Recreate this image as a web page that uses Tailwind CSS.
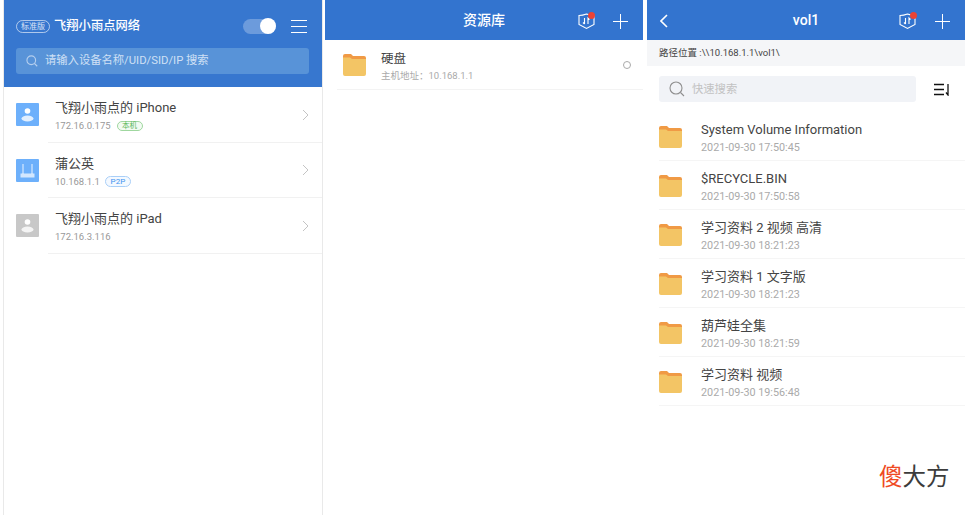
<!DOCTYPE html>
<html lang="zh"><head><meta charset="utf-8"><script src="https://cdn.jsdelivr.net/npm/@tailwindcss/browser@4"></script></head>
<body class="bg-white">
<div class="relative flex w-[968px] h-[515px] overflow-hidden bg-white text-[#333] font-['Roboto','Noto_Sans_CJK_SC',sans-serif]">

<!-- Panel 1 -->
<section class="ml-[3px] w-[320px] h-full border-x border-[#e9e9e9] flex flex-col">
  <header class="h-[87px] bg-[#3777cf] pl-[12px] pr-3 pt-[17px] flex flex-col">
    <div class="flex items-center h-[18px]">
      <span class="w-[34px] h-[13px] rounded-full border border-white/60 text-[8px] leading-[11px] text-center text-white/80 whitespace-nowrap">标准版</span>
      <span class="ml-[4px] text-[12.300px] font-medium text-white whitespace-nowrap">飞翔小雨点网络</span>
      <span class="ml-auto relative w-[33px] h-[15px] rounded-full bg-[#6c9bdc]"><span class="absolute right-0 -top-[1px] w-[16px] h-[16px] rounded-full bg-white"></span></span>
      <svg class="ml-[15px] mr-[3px]" width="16" height="15" viewBox="0 0 16 15" fill="none" stroke="#fff" stroke-width="1"><path d="M0 1.500h16M0 7.500h16M0 13.500h16"/></svg>
    </div>
    <div class="mt-[13px] h-[26px] w-[293px] rounded-[3px] bg-[#5893d8] flex items-center pl-[10px]">
      <svg width="12" height="12" viewBox="0 0 13 13" fill="none" stroke="#b5cfee" stroke-width="1.200"><circle cx="5.700" cy="5.700" r="4.700"/><path d="M9.200 9.200l3 3"/></svg>
      <span class="ml-[7px] text-[11.300px] text-[#cfe0f5] whitespace-nowrap">请输入设备名称/UID/SID/IP 搜索</span>
    </div>
  </header>
  <div>
    <div class="h-[56px] flex items-center border-b border-[#f1f1f1] pl-3 [border-image:linear-gradient(to_right,transparent_45px,#f1f1f1_45px)_1]">
      <svg width="23" height="23" viewBox="0 0 23 23"><rect width="23" height="23" rx="1" fill="#6db0fb"/><circle cx="11.500" cy="8" r="2.800" fill="#fff"/><ellipse cx="11.500" cy="15.500" rx="6" ry="3" fill="#fff" fill-opacity=".8"/></svg>
      <div class="ml-[16px] flex-1 mt-[2px]">
        <div class="text-[13px] leading-[18px] text-[#444] whitespace-nowrap">飞翔小雨点的 iPhone</div>
        <div class="mt-[3px] flex items-center text-[9.500px] leading-[12px] text-[#999]">172.16.0.175<span class="ml-[6px] w-[26px] h-[10px] rounded-full border border-[#9fd79f] bg-[#f2fbf2] text-[7.500px] leading-[8px] text-center text-[#5cb85c]">本机</span></div>
      </div>
      <svg class="mr-[13px]" width="7" height="12" viewBox="0 0 7 12" fill="none" stroke="#c4c4c4" stroke-width="1"><path d="M1 1l5 5-5 5"/></svg>
    </div>
    <div class="h-[55px] flex items-center border-b border-[#f1f1f1] pl-3 [border-image:linear-gradient(to_right,transparent_45px,#f1f1f1_45px)_1]">
      <svg width="23" height="23" viewBox="0 0 23 23"><rect width="23" height="23" rx="1" fill="#6db0fb"/><path d="M7 5v10M16 5v10" stroke="#fff" stroke-opacity=".85" stroke-width="1"/><rect x="4.500" y="14.500" width="14" height="4" fill="#fff" fill-opacity=".7"/></svg>
      <div class="ml-[16px] flex-1 mt-[2px]">
        <div class="text-[13px] leading-[18px] text-[#444] whitespace-nowrap">蒲公英</div>
        <div class="mt-[3px] flex items-center text-[9.500px] leading-[12px] text-[#999]">10.168.1.1<span class="ml-[5px] w-[26px] h-[11px] rounded-full border border-[#a9cff8] bg-[#f4f9ff] text-[8px] leading-[9px] text-center text-[#3f94f0]">P2P</span></div>
      </div>
      <svg class="mr-[13px]" width="7" height="12" viewBox="0 0 7 12" fill="none" stroke="#c4c4c4" stroke-width="1"><path d="M1 1l5 5-5 5"/></svg>
    </div>
    <div class="h-[56px] flex items-center border-b border-[#f1f1f1] pl-3 [border-image:linear-gradient(to_right,transparent_45px,#f1f1f1_45px)_1]">
      <svg width="23" height="23" viewBox="0 0 23 23"><rect width="23" height="23" rx="1" fill="#c8c8c8"/><circle cx="11.500" cy="8" r="2.800" fill="#fff"/><ellipse cx="11.500" cy="15.500" rx="6" ry="3" fill="#fff" fill-opacity=".8"/></svg>
      <div class="ml-[16px] flex-1 mt-[2px]">
        <div class="text-[13px] leading-[18px] text-[#444] whitespace-nowrap">飞翔小雨点的 iPad</div>
        <div class="mt-[3px] text-[9.500px] leading-[12px] text-[#999]">172.16.3.116</div>
      </div>
      <svg class="mr-[13px]" width="7" height="12" viewBox="0 0 7 12" fill="none" stroke="#c4c4c4" stroke-width="1"><path d="M1 1l5 5-5 5"/></svg>
    </div>
  </div>
</section>

<!-- Panel 2 -->
<section class="ml-[2px] w-[318px] h-full flex flex-col">
  <header class="h-[40px] bg-[#3374cf] relative flex items-center justify-center">
    <span class="text-[14px] font-medium text-white">资源库</span>
    <div class="absolute right-[15px] top-[13px] flex items-center gap-[18px]">
      <svg width="17" height="17" viewBox="0 0 17 17" fill="none" stroke="#fff" stroke-width="1.100"><path d="M1 2.500q3.500 0 7.500-1.500 4 1.500 7.500 1.500v9l-7.500 4-7.500-4z"/><path d="M6.500 5v6M5 9.500l1.500 1.500M10 11V5l1.500 1.500"/></svg>
      <svg width="15" height="15" viewBox="0 0 15 15" stroke="#fff" stroke-width="1"><path d="M0 7.500h15M7.500 0v15"/></svg>
    </div>
    <span class="absolute left-[263px] top-[12px] w-[7px] h-[7px] rounded-full bg-[#ea4335]"></span>
  </header>
  <div class="ml-[12px] h-[50px] flex items-center border-b border-[#f3f3f3]">
    <svg class="ml-[6px]" width="23" height="22" viewBox="0 0 23 22"><path d="M0 2a2 2 0 0 1 2-2h6l2 2h11a2 2 0 0 1 2 2v3H0z" fill="#f09a45"/><path d="M0 3.500h7l2 1.500h14v15a2 2 0 0 1-2 2H2a2 2 0 0 1-2-2z" fill="#f3c565"/></svg>
    <div class="ml-[15px] flex-1">
      <div class="mt-[2px] text-[12.500px] leading-[17px] text-[#444]">硬盘</div>
      <div class="mt-[3px] text-[9.500px] leading-[12px] text-[#aaa]">主机地址：10.168.1.1</div>
    </div>
    <span class="mr-[12px] w-[8px] h-[8px] rounded-full border border-[#aaa]"></span>
  </div>
</section>

<!-- Panel 3 -->
<section class="ml-[4px] w-[318px] h-full flex flex-col">
  <header class="h-[40px] bg-[#3374cf] relative flex items-center justify-center">
    <svg class="absolute left-[13px] top-[14px]" width="8" height="14" viewBox="0 0 8 14" fill="none" stroke="#fff" stroke-width="1.600"><path d="M7 1L1 7l6 6"/></svg>
    <span class="text-[14px] font-medium text-white">vol1</span>
    <div class="absolute right-[15px] top-[13px] flex items-center gap-[19px]">
      <svg width="17" height="17" viewBox="0 0 17 17" fill="none" stroke="#fff" stroke-width="1.100"><path d="M1 2.500q3.500 0 7.500-1.500 4 1.500 7.500 1.500v9l-7.500 4-7.500-4z"/><path d="M6.500 5v6M5 9.500l1.500 1.500M10 11V5l1.500 1.500"/></svg>
      <svg width="15" height="15" viewBox="0 0 15 15" stroke="#fff" stroke-width="1"><path d="M0 7.500h15M7.500 0v15"/></svg>
    </div>
    <span class="absolute left-[263px] top-[12px] w-[7px] h-[7px] rounded-full bg-[#ea4335]"></span>
  </header>
  <div class="h-[26px] bg-[#f5f6f8] pl-[12px] flex items-center text-[9.500px] text-[#444] whitespace-nowrap">路径位置 :\\10.168.1.1\vol1\</div>
  <div class="mt-[10px] pl-[12px] flex items-center">
    <div class="w-[257px] h-[26px] rounded-[3px] bg-[#f1f3f7] flex items-center pl-[10px]">
      <svg width="16" height="16" viewBox="0 0 16 16" fill="none" stroke="#8f8f8f" stroke-width="1.100"><circle cx="7" cy="7" r="6"/><path d="M11.500 11.500l3.500 3.500"/></svg>
      <span class="mt-[2px] ml-[7px] text-[11.300px] text-[#c2c2c2]">快速搜索</span>
    </div>
    <svg class="ml-[18px]" width="17" height="13" viewBox="0 0 17 13" fill="none" stroke="#111" stroke-width="1.300"><path d="M0 1.500h10M0 6.500h10M0 11.500h10M14 1v11l-2-2.500"/></svg>
  </div>
  <div class="mt-[10px] pl-[12px]">
    <div class="h-[49px] flex items-center border-b border-[#f5f5f5]">
      <svg class="mt-[1px]" width="23" height="22" viewBox="0 0 23 22"><path d="M0 2a2 2 0 0 1 2-2h6l2 2h11a2 2 0 0 1 2 2v3H0z" fill="#f09a45"/><path d="M0 3.500h7l2 1.500h14v15a2 2 0 0 1-2 2H2a2 2 0 0 1-2-2z" fill="#f3c565"/></svg>
      <div class="ml-[19px] mt-[2px]"><div class="text-[13px] leading-[17px] text-[#444] whitespace-nowrap">System Volume Information</div><div class="mt-[4px] text-[10.800px] leading-[12px] text-[#aaa]">2021-09-30 17:50:45</div></div>
    </div>
    <div class="h-[49px] flex items-center border-b border-[#f5f5f5]">
      <svg class="mt-[1px]" width="23" height="22" viewBox="0 0 23 22"><path d="M0 2a2 2 0 0 1 2-2h6l2 2h11a2 2 0 0 1 2 2v3H0z" fill="#f09a45"/><path d="M0 3.500h7l2 1.500h14v15a2 2 0 0 1-2 2H2a2 2 0 0 1-2-2z" fill="#f3c565"/></svg>
      <div class="ml-[19px] mt-[2px]"><div class="text-[13px] leading-[17px] text-[#444] whitespace-nowrap">$RECYCLE.BIN</div><div class="mt-[4px] text-[10.800px] leading-[12px] text-[#aaa]">2021-09-30 17:50:58</div></div>
    </div>
    <div class="h-[49px] flex items-center border-b border-[#f5f5f5]">
      <svg class="mt-[1px]" width="23" height="22" viewBox="0 0 23 22"><path d="M0 2a2 2 0 0 1 2-2h6l2 2h11a2 2 0 0 1 2 2v3H0z" fill="#f09a45"/><path d="M0 3.500h7l2 1.500h14v15a2 2 0 0 1-2 2H2a2 2 0 0 1-2-2z" fill="#f3c565"/></svg>
      <div class="ml-[19px] mt-[2px]"><div class="text-[13px] leading-[17px] text-[#444] whitespace-nowrap">学习资料 2 视频 高清</div><div class="mt-[4px] text-[10.800px] leading-[12px] text-[#aaa]">2021-09-30 18:21:23</div></div>
    </div>
    <div class="h-[49px] flex items-center border-b border-[#f5f5f5]">
      <svg class="mt-[1px]" width="23" height="22" viewBox="0 0 23 22"><path d="M0 2a2 2 0 0 1 2-2h6l2 2h11a2 2 0 0 1 2 2v3H0z" fill="#f09a45"/><path d="M0 3.500h7l2 1.500h14v15a2 2 0 0 1-2 2H2a2 2 0 0 1-2-2z" fill="#f3c565"/></svg>
      <div class="ml-[19px] mt-[2px]"><div class="text-[13px] leading-[17px] text-[#444] whitespace-nowrap">学习资料 1 文字版</div><div class="mt-[4px] text-[10.800px] leading-[12px] text-[#aaa]">2021-09-30 18:21:23</div></div>
    </div>
    <div class="h-[49px] flex items-center border-b border-[#f5f5f5]">
      <svg class="mt-[1px]" width="23" height="22" viewBox="0 0 23 22"><path d="M0 2a2 2 0 0 1 2-2h6l2 2h11a2 2 0 0 1 2 2v3H0z" fill="#f09a45"/><path d="M0 3.500h7l2 1.500h14v15a2 2 0 0 1-2 2H2a2 2 0 0 1-2-2z" fill="#f3c565"/></svg>
      <div class="ml-[19px] mt-[2px]"><div class="text-[13px] leading-[17px] text-[#444] whitespace-nowrap">葫芦娃全集</div><div class="mt-[4px] text-[10.800px] leading-[12px] text-[#aaa]">2021-09-30 18:21:59</div></div>
    </div>
    <div class="h-[49px] flex items-center border-b border-[#f5f5f5]">
      <svg class="mt-[1px]" width="23" height="22" viewBox="0 0 23 22"><path d="M0 2a2 2 0 0 1 2-2h6l2 2h11a2 2 0 0 1 2 2v3H0z" fill="#f09a45"/><path d="M0 3.500h7l2 1.500h14v15a2 2 0 0 1-2 2H2a2 2 0 0 1-2-2z" fill="#f3c565"/></svg>
      <div class="ml-[19px] mt-[2px]"><div class="text-[13px] leading-[17px] text-[#444] whitespace-nowrap">学习资料 视频</div><div class="mt-[4px] text-[10.800px] leading-[12px] text-[#aaa]">2021-09-30 19:56:48</div></div>
    </div>
  </div>
</section>

<div class="absolute left-[879px] top-[461px] text-[23.500px] leading-[32px] text-[#3c3c3c] whitespace-nowrap"><span class="text-[#ef4a24]">傻</span>大方</div>
</div>
</body></html>
